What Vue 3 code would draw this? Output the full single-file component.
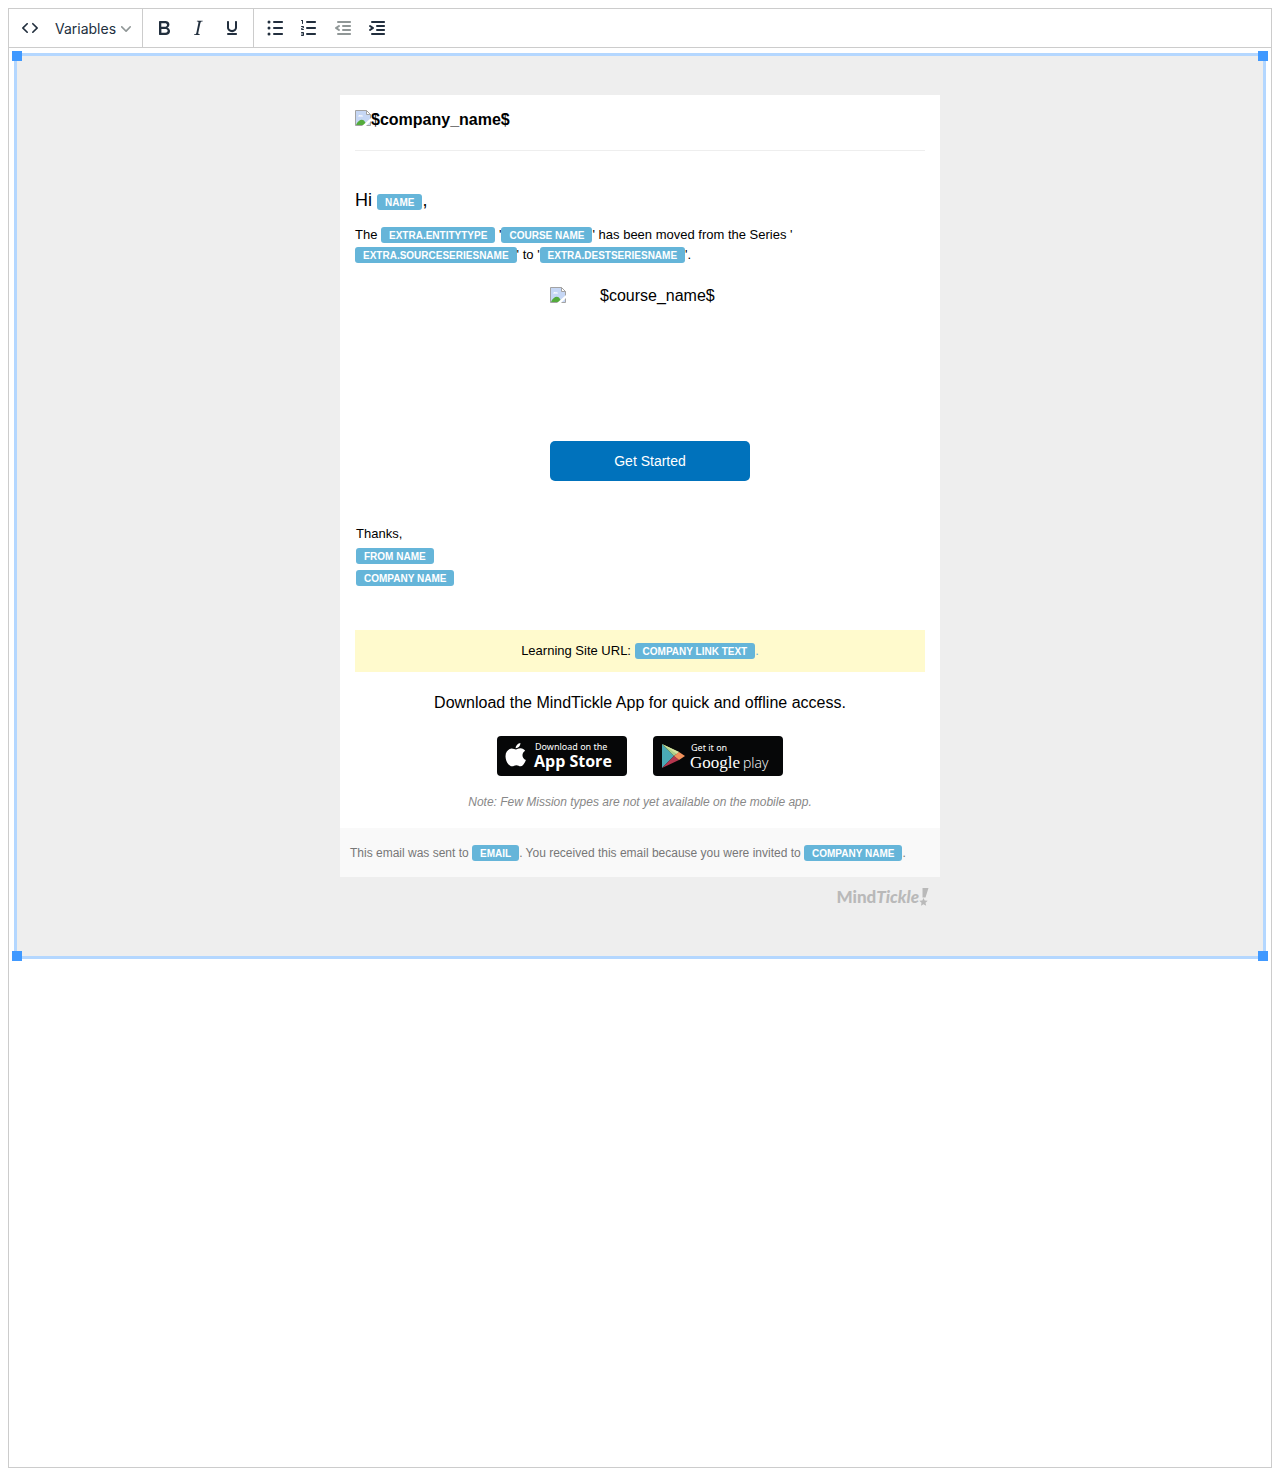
<script setup>
import { ref } from 'vue'

const bar = (x, y, w) => `M${x} ${y}h${w}c.6 0 1 .4 1 1s-.4 1-1 1h-${w}a1 1 0 010-2z`
const dot = (y) => `M4.5 ${y}a1.5 1.5 0 103 0a1.5 1.5 0 10-3 0z`

const formatButtons = [
  {
    label: 'Bold',
    path: 'M7.8 19c-.3 0-.5 0-.6-.2l-.2-.5V5.7c0-.2 0-.4.2-.5l.6-.2h5c1.5 0 2.7.3 3.5 1 .7.6 1.1 1.4 1.1 2.5a3 3 0 01-.6 1.9c-.4.6-1 1-1.6 1.2.4.1.9.3 1.3.6s.8.7 1 1.2c.4.4.5 1 .5 1.6 0 1.3-.4 2.3-1.3 3-.8.7-2.1 1-3.8 1H7.8zm5-8.3c.6 0 1.2-.1 1.6-.5.4-.3.6-.7.6-1.3 0-1.1-.8-1.7-2.3-1.7H9.3v3.5h3.4zm.5 6c.7 0 1.3-.1 1.7-.4.4-.4.6-.9.6-1.5s-.2-1-.7-1.4c-.4-.3-1-.4-2-.4H9.4v3.8h4z',
  },
  {
    label: 'Italic',
    path: 'M16.7 4.7l-.1.9h-.3c-.6 0-1 0-1.4.3-.3.3-.4.6-.5 1.1l-2.1 9.8v.6c0 .5.4.8 1.4.8h.2l-.2.8H8l.2-.8h.2c1.1 0 1.8-.5 2-1.5l2-9.8.1-.5c0-.6-.4-.8-1.4-.8h-.3l.2-.9h5.8z',
  },
  {
    label: 'Underline',
    path: 'M16 5c.6 0 1 .4 1 1v5.5a4 4 0 01-.4 1.8l-1 1.4a5.3 5.3 0 01-5.5 1 5 5 0 01-1.6-1c-.5-.4-.8-.9-1.1-1.4a4 4 0 01-.4-1.8V6c0-.6.4-1 1-1s1 .4 1 1v5.5c0 .3 0 .6.2 1l.6.7a3.3 3.3 0 002.2.8 3.4 3.4 0 002.2-.8c.3-.2.4-.5.6-.8l.2-.9V6c0-.6.4-1 1-1zM8 17h8c.6 0 1 .4 1 1s-.4 1-1 1H8a1 1 0 010-2z',
  },
]

const listButtons = [
  {
    label: 'Bullet list',
    path: bar(11, 5, 8) + bar(11, 11, 8) + bar(11, 17, 8) + dot(6) + dot(12) + dot(18),
  },
  {
    label: 'Numbered list',
    path:
      bar(10, 5, 8) + bar(10, 11, 8) + bar(10, 17, 8) +
      'M6 4v3.5c0 .3-.2.5-.5.5a.5.5 0 01-.5-.5V5h-.5a.5.5 0 010-1H6zm-1 8.8l.2.2h1.3c.3 0 .5.2.5.5s-.2.5-.5.5H4.9a1 1 0 01-.9-1V13c0-.4.3-.8.6-1l1.2-.4.2-.3a.2.2 0 00-.2-.2H4.5a.5.5 0 01-.5-.5c0-.3.2-.5.5-.5h1.6c.5 0 .9.4.9 1v.1c0 .4-.3.8-.6 1l-1.2.4-.2.3zM7 17v2c0 .6-.4 1-1 1H4.5a.5.5 0 010-1h1.2c.2 0 .3-.1.3-.3 0-.2-.1-.3-.3-.3H4.4a.4.4 0 110-.8h1.3c.2 0 .3-.1.3-.3 0-.2-.1-.3-.3-.3H4.5a.5.5 0 110-1H6c.6 0 1 .4 1 1z',
  },
  {
    label: 'Decrease indent',
    disabled: true,
    path:
      bar(7, 5, 12) + bar(12, 9, 7) + bar(12, 13, 7) + bar(7, 17, 12) +
      'M8.6 13.2a1 1 0 01-1.2 1.6l-3-2a1 1 0 010-1.6l3-2a1 1 0 011.2 1.6L6.8 12l1.8 1.2z',
  },
  {
    label: 'Increase indent',
    path:
      bar(7, 5, 12) + bar(12, 9, 7) + bar(12, 13, 7) + bar(7, 17, 12) +
      'M4.4 13.2L6.2 12l-1.8-1.2a1 1 0 011.2-1.6l3 2a1 1 0 010 1.6l-3 2a1 1 0 11-1.2-1.6z',
  },
]

const corners = ['nw', 'ne', 'sw', 'se']
const selected = ref(true)
</script>

<template>
  <div class="editor">
    <div class="toolbar" role="toolbar" aria-label="Editor toolbar">
      <div class="group">
        <button class="tool" type="button" aria-label="Source code">
          <svg width="24" height="24" viewBox="0 0 24 24">
            <path d="M9.8 15.7c.3.3.3.8 0 1-.3.4-.9.4-1.2 0l-4.4-4.1a.8.8 0 010-1.2l4.4-4.2c.3-.3.9-.3 1.2 0 .3.3.3.8 0 1.1L6 12l3.8 3.7zM14.2 15.7c-.3.3-.3.8 0 1 .4.4.9.4 1.2 0l4.4-4.1c.3-.3.3-.9 0-1.2l-4.4-4.2a.8.8 0 00-1.2 0c-.3.3-.3.8 0 1.1L18 12l-3.8 3.7z" />
          </svg>
        </button>
        <button class="tool menu" type="button" aria-haspopup="true">
          <span>Variables</span>
          <svg class="chevron" width="10" height="10" viewBox="0 0 10 10">
            <path d="M8.7 2.2c.3-.3.8-.3 1 0 .4.4.4.9 0 1.2L5.7 7.8c-.3.3-.9.3-1.2 0L.2 3.4a.8.8 0 010-1.2c.3-.3.8-.3 1.1 0L5 6l3.7-3.8z" />
          </svg>
        </button>
      </div>
      <div v-for="(group, i) in [formatButtons, listButtons]" :key="i" class="group">
        <button
          v-for="b in group"
          :key="b.label"
          class="tool"
          type="button"
          :aria-label="b.label"
          :disabled="b.disabled"
        >
          <svg width="24" height="24" viewBox="0 0 24 24">
            <path fill-rule="evenodd" :d="b.path" />
          </svg>
        </button>
      </div>
    </div>

    <div class="canvas">
      <div class="block" :class="{ selected }" @click="selected = true">
        <div class="mail">
          <div class="content">
            <div class="brand">
              <svg class="broken" width="16" height="16" viewBox="0 0 16 16">
                <path d="M.5.5h11l4 4v11H.5z" fill="#c6d7f5" stroke="#a3a3a3" />
                <path d="M11.5.5v4h4z" fill="#fff" stroke="#a3a3a3" />
                <path d="M3 6.5a2 2 0 013-1 1.5 1.5 0 012 1z" fill="#fff" />
                <path d="M1 15c2-5 7-7 9-3l2 3z" fill="#54ab3c" />
                <path d="M7 16l9-8v3l-5 5z" fill="#fff" />
              </svg>
              <strong>$company_name$</strong>
            </div>

            <p class="greeting">Hi <span class="tag">NAME</span>,</p>
            <p class="message">
              The <span class="tag">EXTRA.ENTITYTYPE</span> '<span class="tag">COURSE NAME</span>' has been moved from the Series '<span class="tag">EXTRA.SOURCESERIESNAME</span>' to '<span class="tag">EXTRA.DESTSERIESNAME</span>'.
            </p>

            <div class="course">
              <div class="cover">
                <svg class="broken" width="16" height="16" viewBox="0 0 16 16">
                  <path d="M.5.5h11l4 4v11H.5z" fill="#c6d7f5" stroke="#a3a3a3" />
                  <path d="M11.5.5v4h4z" fill="#fff" stroke="#a3a3a3" />
                  <path d="M3 6.5a2 2 0 013-1 1.5 1.5 0 012 1z" fill="#fff" />
                  <path d="M1 15c2-5 7-7 9-3l2 3z" fill="#54ab3c" />
                  <path d="M7 16l9-8v3l-5 5z" fill="#fff" />
                </svg>
                <span>$course_name$</span>
              </div>
              <a class="start" href="#">Get Started</a>
            </div>

            <div class="signoff">
              <span>Thanks,</span>
              <span class="tag">FROM NAME</span>
              <span class="tag">COMPANY NAME</span>
            </div>

            <p class="site">Learning Site URL: <a class="link" href="#"><span class="tag">COMPANY LINK TEXT</span>.</a></p>

            <p class="download">Download the MindTickle App for quick and offline access.</p>
            <div class="stores">
              <a href="#" aria-label="Download on the App Store">
                <svg width="130" height="40" viewBox="0 0 130 40">
                  <rect width="130" height="40" rx="4" fill="#060708" />
                  <path fill="#fff" d="M23.4 7c.2 2.700-2.100 5.400-4.700 5.300C18.500 9.700 21 7.200 23.400 7zM18.900 13.500c1.200 0 2.600-1.300 4.700-1.200 1.900.1 3.500.9 4.500 2.400-3.900 2.400-3.300 7.700.8 9.300-.9 2.500-3 6.200-5.200 6.300-1.700.1-2.300-1.100-4.300-1.100s-2.700 1.100-4.300 1.100C11.800 30.400 8.500 25 8.500 20.200c0-4.800 3-7.500 6.100-7.600 1.900 0 3.300.9 4.300.9z" />
                  <text x="38" y="14" class="store-small">Download on the</text>
                  <text x="37" y="31" class="store-apple">App Store</text>
                </svg>
              </a>
              <a href="#" aria-label="Get it on Google play">
                <svg width="130" height="40" viewBox="0 0 130 40">
                  <rect width="130" height="40" rx="4" fill="#060708" />
                  <path d="M9 8v24l12-12z" fill="#4aa9b5" />
                  <path d="M9 8l12 12 5-4z" fill="#a9d08a" />
                  <path d="M9 8l17 8-2 2z" fill="#d8e3a0" />
                  <path d="M9 32l12-12 5 4z" fill="#b5374f" />
                  <path d="M21 20l5-4 6 4-6 4z" fill="#f1915c" />
                  <text x="38" y="15" class="store-small">Get it on</text>
                  <text x="37" y="32" class="store-google">Google</text>
                  <text x="90" y="32" class="store-play">play</text>
                </svg>
              </a>
            </div>
            <p class="note">Note: Few Mission types are not yet available on the mobile app.</p>
          </div>

          <p class="footer">This email was sent to <span class="tag">EMAIL</span>. You received this email because you were invited to <span class="tag">COMPANY NAME</span>.</p>
        </div>

        <div class="credit">
          <span>Mind<em>Tickle</em></span>
          <svg width="10" height="18" viewBox="0 0 10 18">
            <path fill="#b9b9b9" d="M3.5 0h6L6.5 9.5h-3zM4.5 10l1.2 2.5 3 .3-2.2 2 .7 2.9-2.7-1.5L2 17.7l.5-2.900-2.200-2 3-.3z" />
          </svg>
        </div>

        <template v-if="selected">
          <span v-for="c in corners" :key="c" class="handle" :class="c"></span>
        </template>
      </div>
    </div>
  </div>
</template>

<style>
body {
  background: #fff;
}
</style>

<style scoped>
.editor {
  box-sizing: border-box;
  min-height: calc(100vh - 16px);
  margin: 8px;
  border: 1px solid #ccc;
  font-family: "Liberation Sans", Arial, sans-serif;
  color: #000;
}

.toolbar {
  display: flex;
  height: 38px;
  border-bottom: 1px solid #ccc;
}

.group {
  display: flex;
  align-items: center;
  padding: 0 4px;
  border-right: 1px solid #ccc;
}

.group:last-child {
  border-right: 0;
}

.tool {
  display: flex;
  align-items: center;
  justify-content: center;
  width: 34px;
  height: 34px;
  padding: 0;
  border: 0;
  border-radius: 3px;
  background: none;
  fill: #222f3e;
  color: #222f3e;
}

.tool:disabled {
  fill: #909797;
}

.menu {
  justify-content: space-between;
  width: 91px;
  padding: 2px 7px 0 8px;
  font: 14px/20px Inter, sans-serif;
}

.chevron {
  fill: #909797;
}

.canvas {
  padding: 8px;
}

.block {
  position: relative;
  padding: 39px 16px 48px;
  background: #eee;
}

.selected {
  outline: 3px solid #b4d7ff;
}

.handle {
  position: absolute;
  width: 10px;
  height: 10px;
  background: #4099ff;
}

.nw { top: -5px; left: -5px; }
.ne { top: -5px; right: -5px; }
.sw { bottom: -5px; left: -5px; }
.se { right: -5px; bottom: -5px; }

p {
  margin: 0;
}

.mail {
  max-width: 600px;
  margin: 0 auto;
  background: #fff;
}

.content {
  padding: 15px 15px 16px;
}

.brand {
  display: flex;
  height: 40px;
  border-bottom: 1px solid #eee;
  font-size: 16px;
  line-height: 20px;
}

.broken {
  flex: none;
}

.tag {
  display: inline-block;
  padding: 2px 8px 0;
  border-radius: 3px;
  background: #65b5d9;
  color: #fff;
  font-size: 10px;
  font-weight: bold;
  line-height: 14px;
}

.greeting {
  margin-top: 36px;
  font-size: 18px;
  line-height: 26px;
}

.message {
  margin-top: 12px;
  font-size: 13px;
  line-height: 20px;
}

.course {
  display: flex;
  flex-direction: column;
  align-items: center;
  gap: 14px;
  margin-top: 22px;
  padding-left: 20px;
}

.cover {
  display: flex;
  gap: 34px;
  width: 200px;
  height: 140px;
  font-size: 16px;
  line-height: 18px;
}

.start {
  width: 200px;
  border-radius: 5px;
  background: #0072bc;
  color: #fff;
  font-size: 14px;
  line-height: 40px;
  text-align: center;
  text-decoration: none;
}

.signoff {
  display: flex;
  flex-direction: column;
  align-items: flex-start;
  gap: 6px;
  margin: 44px 1px;
  font-size: 13px;
  line-height: 17px;
}

.site {
  padding: 11px;
  background: #fffacd;
  font-size: 13px;
  line-height: 20px;
  text-align: center;
}

.link {
  color: #65b5d9;
  text-decoration: none;
}

.download {
  margin-top: 21px;
  font-size: 16px;
  line-height: 20px;
  text-align: center;
}

.stores {
  display: flex;
  justify-content: center;
  gap: 26px;
  margin: 23px 0 16px;
}

.stores svg {
  display: block;
}

.store-small {
  fill: #fff;
  font: 9px "Noto Sans", sans-serif;
}

.store-apple {
  fill: #fff;
  font: bold 16px "Open Sans", sans-serif;
}

.store-google {
  fill: #fff;
  font: 17px "Liberation Serif", serif;
}

.store-play {
  fill: #fff;
  font: 300 14px "Open Sans", sans-serif;
}

.note {
  color: #888;
  font-size: 12px;
  font-style: italic;
  line-height: 20px;
  text-align: center;
}

.footer {
  padding: 15px 10px 14px;
  background: #f9f9f9;
  color: #777;
  font-size: 12px;
  line-height: 20px;
}

.credit {
  display: flex;
  justify-content: flex-end;
  align-items: center;
  box-sizing: border-box;
  max-width: 600px;
  margin: 8px auto 0;
  padding-right: 11px;
  color: #b9b9b9;
  font: 900 17px/23px Lato, sans-serif;
}
</style>
